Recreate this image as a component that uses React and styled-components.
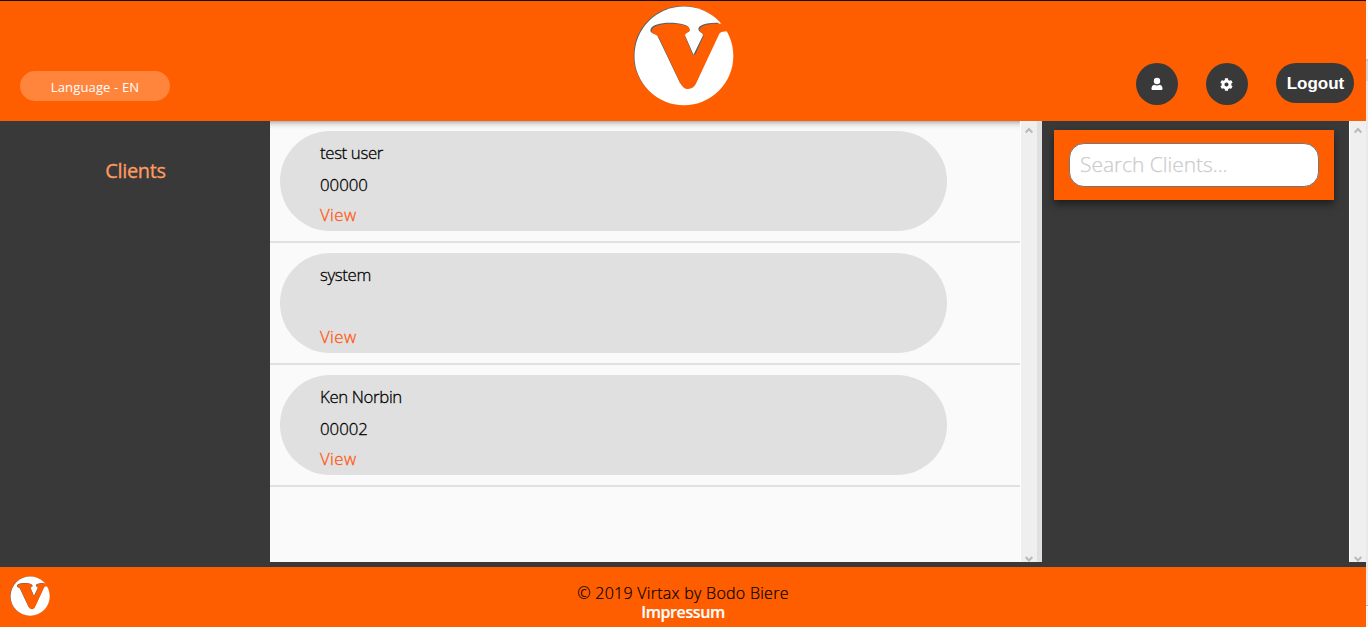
import React from "react";
import styled, { createGlobalStyle } from "styled-components";

const ORANGE = "#ff5e00";
const DARK = "#393939";

const GlobalStyle = createGlobalStyle`
  * { box-sizing: border-box; }
  body { margin: 0; background: #fff; font-family: "Open Sans", "Noto Sans", sans-serif; font-weight: 300; overflow: hidden; }
`;
const Shell = styled.div`
  display: flex;
  width: 1368px;
  height: 627px;
`;
const Page = styled.div`
  display: flex;
  flex-direction: column;
  width: 1366px;
  height: 627px;
  background: ${DARK};
`;
const PageScroll = styled.div`
  width: 2px;
  background: linear-gradient(#f6f6f6 0 59px, #c9c9c9 59px 61px, #d8d8d8 61px 81px, #e9e9e9 81px 605px, #bbb 605px 606px, #f4f4f4 606px);
`;
const Header = styled.header`
  display: grid;
  grid-template-columns: 1fr 100px 1fr;
  height: 121px;
  flex: none;
  background: ${ORANGE};
  border-top: 1px solid #111;
`;
const Language = styled.button`
  justify-self: start;
  width: 150px;
  height: 30px;
  margin: 70px 0 0 20px;
  padding: 2px 0 0;
  border: 0;
  border-radius: 15px;
  background: #ff853d;
  color: #fff;
  font: 400 13px "Open Sans", sans-serif;
  letter-spacing: 0.14px;
`;
const HeaderLogo = styled.div`
  padding-top: 4px;
`;
const Actions = styled.div`
  display: flex;
  justify-content: flex-end;
  gap: 28px;
  padding: 62px 12px 0 0;
`;
const RoundButton = styled.button`
  display: flex;
  align-items: center;
  justify-content: center;
  width: 42px;
  height: 42px;
  padding: 0 1px 0 0;
  border: 0;
  border-radius: 50%;
  background: ${DARK};
`;
const Logout = styled.button`
  width: 78px;
  height: 40px;
  padding: 2px 0 0 1px;
  border: 0;
  border-radius: 20px;
  background: ${DARK};
  color: #fff;
  font: bold 17px "Liberation Sans", Arial, sans-serif;
`;
const Main = styled.main`
  display: flex;
  height: 441px;
  flex: none;
`;
const Sidebar = styled.nav`
  width: 270px;
  padding: 36px 0 0 1px;
  text-align: center;
  color: #ff9a61;
  font-size: 20px;
  font-weight: 500;
  letter-spacing: -0.35px;
  line-height: 28px;
  -webkit-text-stroke: 0.3px currentColor;
`;
const Content = styled.section`
  width: 750px;
  background: linear-gradient(#b4b4b4, #dedede 3px, #f3f3f3 6px, #fafafa 9px);
`;
const ClientRow = styled.div`
  height: 122px;
  padding: 10px;
  border-bottom: 2px solid #e0e0e0;
`;
const ClientCard = styled.div`
  display: grid;
  grid-template-rows: 31px 32px 29px;
  align-items: center;
  width: 667px;
  height: 100px;
  padding: 6px 40px 0;
  border-radius: 50px;
  background: #e0e0e0;
  color: #000;
  font-size: 16.8px;
  line-height: 24px;
  -webkit-text-stroke: 0.3px currentColor;
`;
const ClientName = styled.span`
  letter-spacing: -0.35px;
`;
const ClientNumber = styled.span`
  padding-top: 1px;
`;
const ViewLink = styled.a`
  color: #ff5713;
  letter-spacing: 0.4px;
`;
const ScrollTrack = styled.div`
  display: flex;
  flex-direction: column;
  justify-content: space-between;
  align-items: center;
  width: 17px;
  padding: 6px 1px 0 0;
  background: #efefef;
  border-left: 1px solid #fff;
`;
const Gutter = styled.div`
  width: 5px;
  background: #e0e0e0;
`;
const SearchPanel = styled.aside`
  width: 307px;
  padding: 9px 0 0 12px;
`;
const SearchBox = styled.div`
  width: 280px;
  height: 70px;
  padding: 13px 15px;
  background: ${ORANGE};
  box-shadow: 0 4px 8px rgba(0, 0, 0, 0.5);
`;
const SearchInput = styled.input`
  display: block;
  width: 250px;
  height: 44px;
  padding: 0 10px 3px;
  border: 1px solid #777;
  border-radius: 15px;
  background: #fff;
  font: 300 21px "Open Sans", sans-serif;
  letter-spacing: -0.05px;
  &::placeholder { color: #ccc; opacity: 1; -webkit-text-stroke: 0.25px #ccc; }
`;
const Footer = styled.footer`
  display: grid;
  grid-template-columns: 60px 1fr 60px;
  height: 60px;
  margin-top: 5px;
  background: ${ORANGE};
`;
const FooterLogo = styled.div`
  padding: 9px 0 0 10px;
`;
const FooterText = styled.div`
  padding-top: 16px;
  text-align: center;
  color: #000;
  font-size: 16px;
  letter-spacing: 0.27px;
  line-height: 20px;
  -webkit-text-stroke: 0.2px currentColor;
`;
const Impressum = styled.div`
  color: #fff;
  font-weight: 600;
  letter-spacing: -0.4px;
  line-height: 18px;
`;

const Logo = ({ size }) => (
  <svg width={size} height={size} viewBox="0 0 100 101" style={{ display: "block" }}>
    <circle cx="49.4" cy="50.2" r="49.2" fill="#53636b" />
    <circle cx="50.4" cy="50.9" r="49.4" fill="#fff" />
    <path
      d="M17 24.5C18 20 27 17.8 36 17.8C47 17.8 56 20 56 24.5C56 28 50 26 51.8 31L60 49.8L69.2 31C71 27 64 28 65 23C67 19 76 17.8 85 17.8L85 28L62 79L54 83L46.5 78L24 31C22 28 16 29 17 24.5Z"
      fill="#53636b"
    />
    <path
      d="M18.2 25.2C19 21 28 18.8 36 18.8C47 18.8 56.4 20.5 56.4 25C56.4 28 50.5 27.5 51.6 31.5L58.5 48C59.5 50.5 61.5 50.5 62.6 48L69.6 32C71.6 28 65.5 28 66 24.2C68 20 76 18.8 88 18.6L95 26L91 26.6C88 26.8 86.6 27.3 85.5 29.5L62 79.5C60 83 57 84 54.2 84C51 84 48.7 82 47 78.5L25.5 32.5C23 28 17.5 30 18.2 25.2Z"
      fill={ORANGE}
    />
  </svg>
);

const UserIcon = () => (
  <svg width="12" height="14" viewBox="0 0 12 14" fill="#fff">
    <circle cx="6" cy="4" r="3.2" />
    <path d="M3 7.7Q6 9.3 9 7.7Q11.5 8.4 11.5 11V12Q11.5 13 10.5 13H1.5Q.5 13 .5 12V11Q.5 8.4 3 7.7Z" />
  </svg>
);

const GearIcon = () => (
  <svg width="13" height="13" viewBox="0 0 512 512" fill="#fff">
    <path d="M487.4 315.7l-42.6-24.6c4.3-23.2 4.3-47 0-70.2l42.6-24.6c4.9-2.8 7.1-8.6 5.5-14-11.1-35.6-30-67.8-54.7-94.6-3.8-4.1-10-5.1-14.8-2.3L380.8 110c-17.9-15.4-38.5-27.3-60.8-35.1V25.8c0-5.6-3.9-10.5-9.4-11.7-36.7-8.2-74.3-7.8-109.2 0-5.5 1.2-9.4 6.1-9.4 11.7V75c-22.2 7.9-42.8 19.8-60.8 35.1L88.7 85.5c-4.9-2.8-11-1.9-14.8 2.3-24.7 26.7-43.6 58.9-54.7 94.6-1.7 5.4.6 11.2 5.5 14L67.3 221c-4.3 23.2-4.3 47 0 70.2l-42.6 24.6c-4.9 2.8-7.1 8.6-5.5 14 11.1 35.6 30 67.8 54.7 94.6 3.8 4.1 10 5.1 14.8 2.3l42.6-24.6c17.9 15.4 38.5 27.3 60.8 35.1v49.2c0 5.6 3.9 10.5 9.4 11.7 36.7 8.2 74.3 7.8 109.2 0 5.5-1.2 9.4-6.1 9.4-11.7v-49.2c22.2-7.9 42.8-19.8 60.8-35.1l42.6 24.6c4.9 2.8 11 1.9 14.8-2.3 24.7-26.7 43.6-58.9 54.7-94.6 1.5-5.5-.7-11.3-5.6-14.1zM256 336c-44.1 0-80-35.9-80-80s35.9-80 80-80 80 35.9 80 80-35.9 80-80 80z" />
  </svg>
);

const Arrow = ({ down }) => (
  <svg width="8" height="7" viewBox="0 0 8 7" fill="none" stroke="#b9b9b9" strokeWidth="2">
    <path d={down ? "M.7 2L4 5.5L7.3 2" : "M.7 5.5L4 2L7.3 5.5"} />
  </svg>
);

const Scrollbar = () => (
  <ScrollTrack>
    <Arrow />
    <Arrow down />
  </ScrollTrack>
);

const clients = [
  { name: "test user", number: "00000" },
  { name: "system", number: "" },
  { name: "Ken Norbin", number: "00002" },
];

export default function App() {
  return (
    <Shell>
      <GlobalStyle />
      <Page>
        <Header>
          <Language>Language - EN</Language>
          <HeaderLogo><Logo size={101} /></HeaderLogo>
          <Actions>
            <RoundButton aria-label="Profile"><UserIcon /></RoundButton>
            <RoundButton aria-label="Settings"><GearIcon /></RoundButton>
            <Logout>Logout</Logout>
          </Actions>
        </Header>
        <Main>
          <Sidebar>Clients</Sidebar>
          <Content>
            {clients.map((c) => (
              <ClientRow key={c.name}>
                <ClientCard>
                  <ClientName>{c.name}</ClientName>
                  <ClientNumber>{c.number}</ClientNumber>
                  <ViewLink>View</ViewLink>
                </ClientCard>
              </ClientRow>
            ))}
          </Content>
          <Scrollbar />
          <Gutter />
          <SearchPanel>
            <SearchBox><SearchInput placeholder="Search Clients..." /></SearchBox>
          </SearchPanel>
          <Scrollbar />
        </Main>
        <Footer>
          <FooterLogo><Logo size={40} /></FooterLogo>
          <FooterText>
            © 2019 Virtax by Bodo Biere
            <Impressum>Impressum</Impressum>
          </FooterText>
        </Footer>
      </Page>
      <PageScroll />
    </Shell>
  );
}
